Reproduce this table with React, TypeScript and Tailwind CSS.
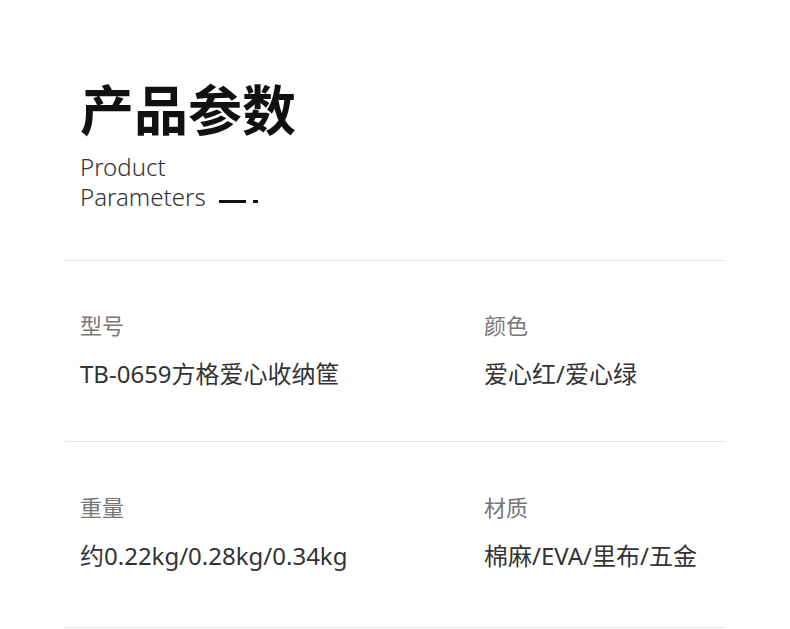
const rows = [
  [
    { label: "型号", value: "TB-0659方格爱心收纳筐" },
    { label: "颜色", value: "爱心红/爱心绿" },
  ],
  [
    { label: "重量", value: "约0.22kg/0.28kg/0.34kg" },
    { label: "材质", value: "棉麻/EVA/里布/五金" },
  ],
];

export default function App() {
  return (
    <div
      className="w-[790px] h-[629px] bg-white overflow-hidden"
      style={{ fontFamily: '"Noto Sans", "Noto Sans CJK SC", sans-serif' }}
    >
      <div className="w-[660px] mx-auto">
        <div className="px-[15px] pt-[81px] pb-[48px]">
          <h1
            className="text-[54px] leading-none font-bold text-[#111]"
            style={{ fontFamily: '"Noto Sans CJK SC", sans-serif' }}
          >
            产品参数
          </h1>
          <div className="mt-[17px] text-[24px] leading-[30px] font-light text-[#333]">
            <div>Product</div>
            <div className="flex items-end">
              <span>Parameters</span>
              <span className="mb-[9px] ml-[13px] flex items-center gap-[7px]">
                <span className="block w-[27px] h-[3px] bg-[#111]" />
                <span className="block w-[5px] h-[3px] bg-[#111]" />
              </span>
            </div>
          </div>
        </div>

        {rows.map((row, i) => (
          <div
            key={i}
            className={`grid grid-cols-[404px_1fr] border-t border-[#e6e6e6] px-[15px] ${
              i === 0 ? "pt-[49px] pb-[51px]" : "pt-[50px] pb-[55px] border-b"
            }`}
          >
            {row.map((item) => (
              <div key={item.label}>
                <div className="text-[22px] leading-[30px] text-[#777]">{item.label}</div>
                <div className="mt-[18px] text-[24px] leading-[32px] text-[#333]">{item.value}</div>
              </div>
            ))}
          </div>
        ))}
      </div>
    </div>
  );
}
